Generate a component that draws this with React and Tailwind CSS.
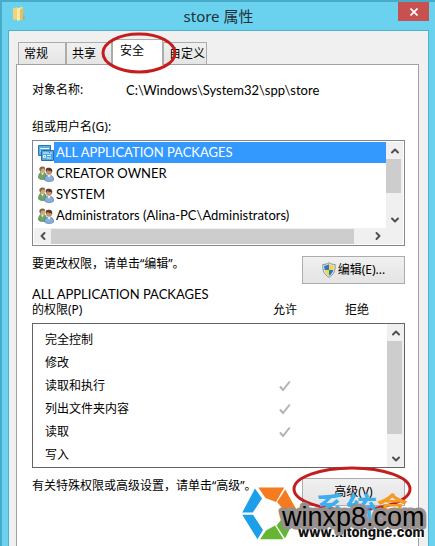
import { ChevronDown, ChevronLeft, ChevronRight, ChevronUp } from "lucide-react";

const tabs = [
  { label: "常规", width: "w-12" },
  { label: "共享", width: "w-[46px]" },
  { label: "安全", width: "w-[51px]", active: true },
  { label: "自定义", width: "w-11" },
];

const principals = [
  { name: "ALL APPLICATION PACKAGES", selected: true },
  { name: "CREATOR OWNER" },
  { name: "SYSTEM" },
  { name: "Administrators (Alina-PC\\Administrators)" },
];

const permissions = [
  { name: "完全控制" },
  { name: "修改" },
  { name: "读取和执行", allow: true },
  { name: "列出文件夹内容", allow: true },
  { name: "读取", allow: true },
  { name: "写入" },
];

function FolderIcon() {
  return (
    <svg viewBox="0 0 16 16" className="size-4" aria-hidden="true">
      <path d="M1 2.5 5 1l1 1v11l-4 1-1-1z" fill="#f3d27a" />
      <path d="M5 2.5 10 1l1 1v11l-6 2z" fill="#fbeaa8" />
      <path d="m8 3 3-1v11l-3 2z" fill="#e9c057" />
      <path d="m11 8 2 2v3l-2 1z" fill="#8bb3c0" />
    </svg>
  );
}

function PackageIcon() {
  return (
    <svg viewBox="0 0 16 16" className="size-4 shrink-0" aria-hidden="true">
      <path d="M.5.5h12v10H.5z" fill="#5aaee0" stroke="#2a77b5" />
      <path d="M2 3.500h9M2 6h3" stroke="#e5f5ff" />
      <path d="M3.500 5.500h12v10h-12z" fill="#54a9dd" stroke="#246fab" />
      <path d="M5 8h9M5.500 10.500h2v2h-2zM9 10.500h4M9 13h4" fill="none" stroke="#e5f5ff" />
      <path d="M11 7.500h1" stroke="#246fab" />
    </svg>
  );
}

function UsersIcon() {
  return (
    <svg viewBox="0 0 16 16" className="size-4 shrink-0" aria-hidden="true">
      <path d="M.5 12c0-4 1.500-6 4-6s4 2 4 6c-2 2-6 2-8 0z" fill="#6fa560" stroke="#45743d" strokeWidth=".6" />
      <path d="m3 6.500 1.500 3 1.500-3z" fill="#e9f2dc" />
      <circle cx="4.500" cy="3.800" r="2.700" fill="#d4a77b" />
      <path d="M1.500 4C1 1 3 .3 4.800.4 6.600.5 7.500 1.800 7 3 5 2 3.500 2.300 3 4l-.5 2z" fill="#866544" />
      <path d="M6.500 14c0-3.500 1.500-5 4.500-5s4.700 1.700 4.700 5c-2 2-7 2-9.200 0z" fill="#86aede" stroke="#486f9f" strokeWidth=".6" />
      <path d="m9.500 9 1.500 3 1.700-3z" fill="#edf4ff" />
      <circle cx="11" cy="5.800" r="3" fill="#c98f63" />
      <path d="M8 6C7 3 8.500 1.500 11 1.700c2.500 0 4 1.800 3 5L13 5c-2 0-3-.5-3.500-1z" fill="#5c3b2a" />
    </svg>
  );
}

function ShieldIcon() {
  return (
    <svg viewBox="0 0 16 18" className="h-4 w-[14px]" aria-hidden="true">
      <path d="M8 .7c2 1.500 4.500 2 7 2 .5 7-1.500 11.500-7 14.600C2.500 14.200.5 9.700 1 2.700c2.500 0 5-.5 7-2z" fill="#e8edf0" stroke="#71818c" />
      <path d="M8 2.500C6.500 3.400 4.500 4 2.500 4.200c0 1.800.1 3.300.5 4.800h5z" fill="#2d78b8" />
      <path d="M8 2.500c1.500.9 3.500 1.500 5.500 1.700 0 1.800-.1 3.300-.5 4.800H8z" fill="#f1d54a" />
      <path d="M3 9c.8 3 2.400 5 5 6.600V9z" fill="#f1d54a" />
      <path d="M13 9c-.8 3-2.400 5-5 6.600V9z" fill="#2d78b8" />
    </svg>
  );
}

function Tick() {
  return (
    <svg viewBox="0 0 12 12" className="mx-auto block size-3" role="img" aria-label="允许">
      <path d="m1 6.500 3 3.500 6.800-8.500" fill="none" stroke="#b2b2b2" strokeWidth="2" />
    </svg>
  );
}

function ArrowButton({ icon: Icon, label }) {
  return (
    <button type="button" aria-label={label} className="flex size-[17px] shrink-0 items-center justify-center text-[#505050]">
      <Icon size={12} strokeWidth={4} />
    </button>
  );
}

function PushButton({ children }) {
  return (
    <button
      type="button"
      className="flex h-7 w-[103px] shrink-0 items-center justify-center gap-0.5 border border-[#acacac] bg-linear-to-b from-[#f0f0f0] to-[#e4e4e4]"
    >
      {children}
    </button>
  );
}

function Watermark() {
  return (
    <svg viewBox="0 0 188 66" className="absolute -right-[23px] -bottom-[38px] h-[66px] w-[188px]">
      <path d="M15 10.500 2.300 34.500h10.500L22 20.500z" fill="#1c9ee8" />
      <path d="M2.300 36.800 17.500 61.300 23 52 13 36.800z" fill="#1c9ee8" />
      <path d="M18.300 9.500h26L36 24l-10.500-4z" fill="#f47b20" />
      <path d="M45.300 11.500 57.700 34H45.500L37 24z" fill="#f47b20" />
      <path d="M20 61.300h23.500L35 47.500l-9 5z" fill="#65b633" />
      <path d="M57 36.500H45.500l-9 11 8.500 13z" fill="#65b633" />
      <g fontFamily="'Noto Sans CJK SC', sans-serif" fontSize="31" fontWeight="700">
        <text x="75" y="42" fill="#3dafee">系统</text>
        <text x="137" y="42" fill="#f59a23">盒</text>
      </g>
      <text x="58" y="59" fontFamily="Inter, sans-serif" fontSize="13" fontWeight="800" fill="#111" stroke="#fff" strokeWidth="2" paintOrder="stroke">
        www.xitongne.com
      </text>
      <text x="42" y="48" fontFamily="'Liberation Sans', Arial, sans-serif" fontSize="27" fill="#000" stroke="#96918f" strokeWidth="7" strokeLinejoin="round" paintOrder="stroke">
        winxp8.com
      </text>
    </svg>
  );
}

export default function App() {
  return (
    <main className="flex h-screen min-h-[546px] flex-col overflow-hidden border-t-2 border-l-2 border-[#48acc8] bg-[#6ad2ee] pr-1.5 pl-1.5 font-['Noto_Sans','Noto_Sans_CJK_SC',sans-serif] text-xs leading-4 text-black">
      <header className="grid h-7 shrink-0 grid-cols-[31px_1fr_31px]">
        <span className="mt-1 ml-1">
          <FolderIcon />
        </span>
        <h1 className="pt-0.5 text-center text-[15px] leading-6 text-[#20313a]">store 属性</h1>
        <button type="button" aria-label="关闭" className="flex h-[19px] items-center justify-center bg-[#c75050] text-white">
          <svg viewBox="0 0 8 8" className="size-2">
            <path d="m.5.5 7 7m0-7-7 7" stroke="currentColor" strokeWidth="1.600" />
          </svg>
        </button>
      </header>

      <div className="flex flex-1 flex-col border-x border-t border-[#50afc9] bg-[#f0f0f0] pt-2 pr-[9px] pl-[7px]">
        <div role="tablist" className="flex shrink-0 items-end pl-0.5">
          {tabs.map((tab) => (
            <button
              key={tab.label}
              type="button"
              role="tab"
              aria-selected={!!tab.active}
              className={
                tab.active
                  ? `relative -mb-px h-[26px] border border-b-0 border-[#acacac] bg-white pb-1 pl-[7px] text-left ${tab.width}`
                  : `h-[22px] border border-b-0 border-[#acacac] bg-linear-to-b from-[#f0f0f0] to-[#e5e5e5] px-[5px] text-left whitespace-nowrap ${tab.width}`
              }
            >
              {tab.label}
              {tab.active && (
                <svg viewBox="0 0 76 42" className="pointer-events-none absolute -top-2 -left-3 z-10 h-[42px] w-[76px]" aria-hidden="true">
                  <ellipse cx="38" cy="21" rx="36" ry="19" fill="none" stroke="#c31d1d" strokeWidth="3" />
                </svg>
              )}
            </button>
          ))}
        </div>

        <section className="flex-1 border-x border-t border-[#a0a0a5] bg-white pt-[17px] pr-[13px] pl-[15px]">
          <div className="flex">
            <span className="w-[94px]">对象名称:</span>
            <span className="font-[Lato,sans-serif] text-[13px]">C:\Windows\System32\spp\store</span>
          </div>

          <h2 id="principals" className="mt-[21px]">组或用户名(G):</h2>
          <div className="mt-[5px] border border-[#828790] p-px">
            <div className="flex">
              <ul role="listbox" aria-labelledby="principals" className="h-[86px] min-w-0 flex-1 overflow-hidden font-[Lato,sans-serif] text-[13px]">
                {principals.map((p) => (
                  <li key={p.name} role="option" aria-selected={!!p.selected} className="flex h-[21px] items-center pl-1">
                    {p.selected ? <PackageIcon /> : <UsersIcon />}
                    <span
                      className={
                        p.selected
                          ? "h-full flex-1 bg-[#3399ff] pl-0.5 leading-[21px] whitespace-nowrap text-white"
                          : "h-full flex-1 pl-0.5 leading-[21px] whitespace-nowrap"
                      }
                    >
                      {p.name}
                    </span>
                  </li>
                ))}
              </ul>
              <div className="flex w-[17px] flex-col justify-between bg-[#f0f0f0]">
                <ArrowButton icon={ChevronUp} label="向上滚动" />
                <span className="mb-auto h-[34px] w-[15px] bg-[#cdcdcd]" />
                <ArrowButton icon={ChevronDown} label="向下滚动" />
              </div>
            </div>
            <div className="flex h-4 items-center bg-[#f0f0f0] pr-[17px]">
              <ArrowButton icon={ChevronLeft} label="向左滚动" />
              <span className="mr-[15px] h-[15px] flex-1 bg-[#cdcdcd]" />
              <ArrowButton icon={ChevronRight} label="向右滚动" />
            </div>
          </div>

          <div className="mt-2.5 flex items-start justify-between">
            <p>要更改权限，请单击“编辑”。</p>
            <PushButton>
              <ShieldIcon />
              编辑(E)...
            </PushButton>
          </div>

          <div className="mt-0.5 flex items-end">
            <h2 id="permissions" className="flex-1">
              <span className="block font-[Lato,sans-serif] text-[13px]">ALL APPLICATION PACKAGES</span>
              的权限(P)
            </h2>
            <span className="w-[72px] text-center">允许</span>
            <span className="mr-3 w-[72px] text-center">拒绝</span>
          </div>
          <div className="mt-[5px] flex border border-[#646464]">
            <table aria-labelledby="permissions" className="mt-1 mb-px flex-1 table-fixed">
              <tbody>
                {permissions.map((p) => (
                  <tr key={p.name} className="h-[23px]">
                    <th scope="row" className="p-0 pl-3 text-left font-normal">{p.name}</th>
                    <td className="w-[72px] p-0">{p.allow && <Tick />}</td>
                    <td className="w-[66px] p-0" />
                  </tr>
                ))}
              </tbody>
            </table>
            <div className="flex w-[17px] flex-col bg-[#f0f0f0]">
              <ArrowButton icon={ChevronUp} label="向上滚动" />
              <span className="mb-auto h-[93px] w-[15px] bg-[#cdcdcd]" />
              <ArrowButton icon={ChevronDown} label="向下滚动" />
            </div>
          </div>

          <div className="relative mt-2.5 flex items-start justify-between">
            <p>有关特殊权限或高级设置，请单击“高级”。</p>
            <PushButton>高级(V)</PushButton>
            <svg viewBox="0 0 120 46" className="pointer-events-none absolute -top-3 -right-[7px] h-[46px] w-[120px]" aria-hidden="true">
              <ellipse cx="60" cy="23" rx="58" ry="21" fill="none" stroke="#c31d1d" strokeWidth="3" />
            </svg>
            <Watermark />
          </div>
        </section>
      </div>
    </main>
  );
}
